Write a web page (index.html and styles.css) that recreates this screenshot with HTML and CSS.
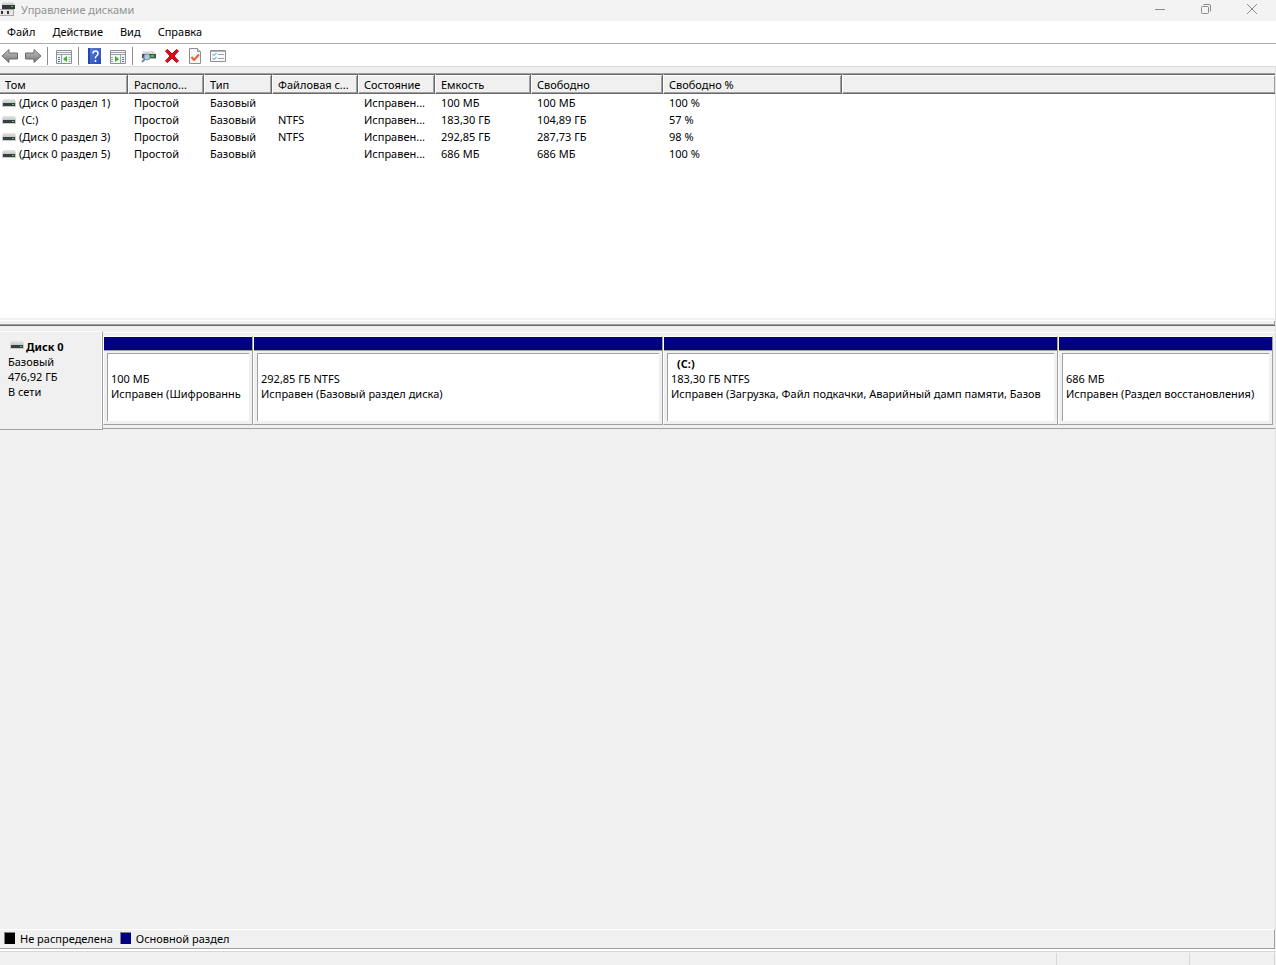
FILE: index.html
```
<!DOCTYPE html>
<html lang="ru">
<head>
    <meta charset="UTF-8">
    <meta name="viewport" content="width=device-width, initial-scale=1.0">
    <title>Управление дисками</title>
    <link rel="stylesheet" href="styles.css">
</head>
<body>
    <svg class="defs" width="0" height="0" aria-hidden="true">
        <linearGradient id="silver" x1="0" y1="0" x2="0" y2="1">
            <stop offset="0" stop-color="#e4e6e8"/>
            <stop offset="1" stop-color="#c2c6ca"/>
        </linearGradient>
        <linearGradient id="arrow" x1="0" y1="0" x2="0" y2="1">
            <stop offset="0" stop-color="#c8c8c8"/>
            <stop offset="1" stop-color="#707070"/>
        </linearGradient>
        <linearGradient id="help" x1="0" y1="0" x2="1" y2="1">
            <stop offset="0" stop-color="#5d82dc"/>
            <stop offset="1" stop-color="#2448b8"/>
        </linearGradient>
        <symbol id="drive" viewBox="0 0 14 8">
            <path d="M1 0h12l1 4H0z" fill="url(#silver)"/>
            <path d="M0 4h14v4H0z" fill="#c9cccf"/>
            <path d="M1 4h12v3H1z" fill="#3b3e40"/>
            <path d="M10 5h2v1h-2z" fill="#3be03b"/>
        </symbol>
    </svg>

    <header class="titlebar">
        <svg class="app-icon" width="16" height="16" viewBox="0 0 16 16">
            <path d="M3 1h10l2 3H1z" fill="url(#silver)"/>
            <path d="M2 4h13v4H2z" fill="#34383a"/>
            <path d="M11 5h2v1h-2z" fill="#3be03b"/>
            <path d="M0 8h14v7H0z" fill="#a8a8a8"/>
            <path d="M0 9h13v5H0z" fill="#e6e6e6"/>
            <path d="M1 10h2v3H1zM7 10h2v3H7z" fill="#333"/>
        </svg>
        <h1>Управление дисками</h1>
        <div class="window-buttons">
            <button type="button" aria-label="Свернуть">
                <svg width="12" height="12" viewBox="0 0 12 12"><path d="M1 6.500h10"/></svg>
            </button>
            <button type="button" aria-label="Восстановить">
                <svg width="12" height="12" viewBox="0 0 12 12"><rect x="1.500" y="3.500" width="7" height="7" rx="1"/><path d="M3.500 1.500H9q1.500 0 1.500 1.500v5.500"/></svg>
            </button>
            <button type="button" aria-label="Закрыть">
                <svg width="12" height="12" viewBox="0 0 12 12"><path d="M1 1l10 10M11 1L1 11"/></svg>
            </button>
        </div>
    </header>

    <nav class="menu">
        <button type="button">Файл</button>
        <button type="button">Действие</button>
        <button type="button">Вид</button>
        <button type="button">Справка</button>
    </nav>

    <div class="toolbar">
        <button type="button" aria-label="Назад">
            <svg width="18" height="16" viewBox="0 0 18 16"><path d="M1 8l7-6.500V5h8.500v6H8v3.500z" fill="url(#arrow)" stroke="#6c6c6c"/></svg>
        </button>
        <button type="button" aria-label="Вперёд">
            <svg width="18" height="16" viewBox="0 0 18 16"><path d="M17 8l-7-6.500V5H1.500v6H10v3.500z" fill="url(#arrow)" stroke="#6c6c6c"/></svg>
        </button>
        <span class="separator"></span>
        <button type="button" aria-label="Дерево консоли">
            <svg width="18" height="16" viewBox="0 0 18 16">
                <path d="M1.500 2.500h15v13h-15z" fill="#f5f6f7" stroke="#8a9097"/>
                <path d="M2 4.500h14M2 6.500h14M6.500 7v8" stroke="#9ba1a7" fill="none"/>
                <path d="M3 9.500h2M3 11.500h2M3 13.500h2" stroke="#3f78b5"/>
                <path d="M13.500 9.500h2M13.500 11.500h2M13.500 13.500h2" stroke="#a3a8ad"/>
                <path d="M12 8v6l-4-3z" fill="#35b51d"/>
                <path d="M13 3h1v1h-1zM15 3h1v1h-1z" fill="#fff"/>
            </svg>
        </button>
        <span class="separator"></span>
        <button type="button" aria-label="Справка">
            <svg width="18" height="16" viewBox="0 0 18 16">
                <path d="M2 0h13v16H2z" fill="url(#help)"/>
                <path d="M2 0h2v16H2z" fill="#2747a8"/>
                <path d="M7 5.500Q7 3 9.500 3T12 5.500Q12 7 10.500 8T9.500 10.500M9.500 12v2" fill="none" stroke="#fff" stroke-width="1.500"/>
            </svg>
        </button>
        <button type="button" aria-label="Панель действий">
            <svg width="18" height="16" viewBox="0 0 18 16">
                <path d="M1.500 2.500h15v13h-15z" fill="#f5f6f7" stroke="#8a9097"/>
                <path d="M2 4.500h14M2 6.500h14M11.500 7v8" stroke="#9ba1a7" fill="none"/>
                <path d="M13 9.500h2M13 11.500h2M13 13.500h2" stroke="#3f78b5"/>
                <path d="M2 9.500h2M2 11.500h2M2 13.500h2" stroke="#a3a8ad"/>
                <path d="M6 8v6l4-3z" fill="#35b51d"/>
            </svg>
        </button>
        <span class="separator"></span>
        <button type="button" aria-label="Повторить проверку дисков">
            <svg width="18" height="16" viewBox="0 0 18 16">
                <path d="M3 3h11l2 4H2z" fill="url(#silver)"/>
                <path d="M2 6h14v4H2z" fill="#4b5054"/>
                <path d="M2 10h14v1H2z" fill="#b6babd"/>
                <path d="M11 7h3v2h-3z" fill="#37d437"/>
                <circle cx="7" cy="9" r="3" fill="#a9cbe2" stroke="#7898ae"/>
                <path d="M5 11l-3 3" stroke="#7c8b98" stroke-width="2"/>
            </svg>
        </button>
        <button type="button" aria-label="Удалить">
            <svg width="18" height="16" viewBox="0 0 18 16"><path d="M2.500 3l2-1.500L9 6l4.500-4.500 2 1.500L11 8l4.500 5-2 1.500L9 10l-4.500 4.500-2-1.500L7 8z" fill="#e00b18" stroke="#b8000c"/></svg>
        </button>
        <button type="button" aria-label="Свойства">
            <svg width="18" height="16" viewBox="0 0 18 16">
                <path d="M3.500.500h8l3 3v12h-11z" fill="#f8f8f8" stroke="#8e8e8e"/>
                <path d="M11.500.500v3h3" fill="#ddd" stroke="#8e8e8e"/>
                <path d="M5.500 9l2.500 3 5-5.500" fill="none" stroke="#e8622a" stroke-width="2"/>
            </svg>
        </button>
        <button type="button" aria-label="Параметры">
            <svg width="18" height="16" viewBox="0 0 18 16">
                <path d="M1.500 2.500h15v11h-15z" fill="#f8f9fa" stroke="#8a9097"/>
                <path d="M2 3.500h14" stroke="#b0b4b8"/>
                <path d="M9 6.500h6M9 10.500h6" stroke="#9ba1a7"/>
                <path d="M3.500 6l1.500 1.500L7.500 5M3.500 10l1.500 1.500L7.500 9" fill="none" stroke="#3b8bd0"/>
            </svg>
        </button>
    </div>

    <main>
        <section class="volumes">
            <table>
                <colgroup>
                    <col class="col-name">
                    <col class="col-layout">
                    <col class="col-type">
                    <col class="col-fs">
                    <col class="col-state">
                    <col class="col-size">
                    <col class="col-free">
                    <col class="col-percent">
                    <col>
                </colgroup>
                <thead>
                    <tr>
                        <th>Том</th>
                        <th>Располо...</th>
                        <th>Тип</th>
                        <th>Файловая с...</th>
                        <th>Состояние</th>
                        <th>Емкость</th>
                        <th>Свободно</th>
                        <th>Свободно %</th>
                        <th></th>
                    </tr>
                </thead>
                <tbody>
                    <tr>
                        <td><svg class="drive" width="14" height="8"><use href="#drive"/></svg>(Диск 0 раздел 1)</td>
                        <td>Простой</td><td>Базовый</td><td></td><td>Исправен...</td><td>100 МБ</td><td>100 МБ</td><td>100 %</td><td></td>
                    </tr>
                    <tr>
                        <td><svg class="drive" width="14" height="8"><use href="#drive"/></svg>&nbsp;(C:)</td>
                        <td>Простой</td><td>Базовый</td><td>NTFS</td><td>Исправен...</td><td>183,30 ГБ</td><td>104,89 ГБ</td><td>57 %</td><td></td>
                    </tr>
                    <tr>
                        <td><svg class="drive" width="14" height="8"><use href="#drive"/></svg>(Диск 0 раздел 3)</td>
                        <td>Простой</td><td>Базовый</td><td>NTFS</td><td>Исправен...</td><td>292,85 ГБ</td><td>287,73 ГБ</td><td>98 %</td><td></td>
                    </tr>
                    <tr>
                        <td><svg class="drive" width="14" height="8"><use href="#drive"/></svg>(Диск 0 раздел 5)</td>
                        <td>Простой</td><td>Базовый</td><td></td><td>Исправен...</td><td>686 МБ</td><td>686 МБ</td><td>100 %</td><td></td>
                    </tr>
                </tbody>
            </table>
        </section>

        <div class="splitter"></div>

        <section class="disks">
            <div class="disk">
                <div class="disk-label">
                    <h2><svg class="drive" width="14" height="8"><use href="#drive"/></svg>Диск 0</h2>
                    <p>Базовый</p>
                    <p>476,92 ГБ</p>
                    <p>В сети</p>
                </div>
                <div class="parts">
                    <div class="part part-efi">
                        <div class="stripe"></div>
                        <div class="info">
                            <h3>&nbsp;</h3>
                            <p>100 МБ</p>
                            <p>Исправен (Шифрованнь</p>
                        </div>
                    </div>
                    <div class="part part-data">
                        <div class="stripe"></div>
                        <div class="info">
                            <h3>&nbsp;</h3>
                            <p>292,85 ГБ NTFS</p>
                            <p>Исправен (Базовый раздел диска)</p>
                        </div>
                    </div>
                    <div class="part part-system">
                        <div class="stripe"></div>
                        <div class="info">
                            <h3>(C:)</h3>
                            <p>183,30 ГБ NTFS</p>
                            <p>Исправен (Загрузка, Файл подкачки, Аварийный дамп памяти, Базов</p>
                        </div>
                    </div>
                    <div class="part part-recovery">
                        <div class="stripe"></div>
                        <div class="info">
                            <h3>&nbsp;</h3>
                            <p>686 МБ</p>
                            <p>Исправен (Раздел восстановления)</p>
                        </div>
                    </div>
                </div>
            </div>
        </section>
    </main>

    <div class="legend">
        <span class="swatch unallocated"></span><span class="legend-text">Не распределена</span>
        <span class="swatch primary"></span><span class="legend-text">Основной раздел</span>
    </div>

    <footer class="statusbar">
        <span class="status-main"></span>
        <span class="status-mid"></span>
        <span class="status-end"></span>
    </footer>
</body>
</html>
```
FILE: styles.css
```
* {
    box-sizing: border-box;
}

body {
    margin: 0;
    min-height: 100vh;
    display: flex;
    flex-direction: column;
    background-color: #f0f0f0;
    color: #000;
    font-family: "Noto Sans", "Open Sans", sans-serif;
    font-size: 11px;
    line-height: 15px;
}

h1, h2, h3, p {
    margin: 0;
    font-size: inherit;
}

button {
    padding: 0;
    border: none;
    background: none;
    color: inherit;
    font: inherit;
}

svg {
    display: block;
}

.defs {
    position: absolute;
}

/* title bar */
.titlebar {
    display: flex;
    align-items: center;
    height: 21px;
    padding: 0 1px 3px 0;
    background-color: #f3f3f3;
    color: #929292;
}

.titlebar h1 {
    margin-left: 5px;
    font-weight: normal;
}

.window-buttons {
    display: flex;
    margin-left: auto;
}

.window-buttons button {
    display: flex;
    justify-content: center;
    align-items: center;
    width: 46px;
    height: 16px;
}

.window-buttons svg {
    fill: none;
    stroke: #8a8a8a;
}

.menu {
    display: flex;
    gap: 17px;
    height: 23px;
    padding: 0 7px 2px;
    background-color: #fff;
    border-bottom: 1px solid #ababb0;
}

.toolbar {
    display: flex;
    align-items: center;
    gap: 5px;
    height: 23px;
    padding: 2px 1px 0;
    background-color: #fff;
    border-bottom: 1px solid #d9d9d9;
}

.separator {
    width: 1px;
    height: 18px;
    margin-right: 2px;
    background-color: #8d8d8d;
}

/* volume list */
main {
    flex: 1;
    display: flex;
    flex-direction: column;
    padding-top: 6px;
    border-right: 1px solid #e0e0e0;
}

.volumes {
    height: 245px;
    background-color: #fff;
    border-top: 1px solid #a0a0a0;
}

.volumes table {
    width: 100%;
    table-layout: fixed;
    border-collapse: separate;
    border-spacing: 0;
}

.col-name { width: 128px; }
.col-layout { width: 76px; }
.col-type { width: 68px; }
.col-fs { width: 86px; }
.col-state { width: 77px; }
.col-size { width: 96px; }
.col-free { width: 132px; }
.col-percent { width: 179px; }

.volumes th,
.volumes td {
    padding: 0 0 0 6px;
    overflow: hidden;
    text-align: left;
    font-weight: normal;
    white-space: nowrap;
}

.volumes th {
    height: 20px;
    padding-left: 5px;
    background-color: #f0f0f0;
    border: 1px solid #fff;
    border-top-color: #696969;
    border-right-color: #696969;
    border-bottom-color: #696969;
    box-shadow: inset 0 1px #fff, inset -1px -1px #a0a0a0;
}

.volumes th:first-child {
    border-left: none;
}

.volumes th:last-child {
    border-right: none;
}

.volumes td {
    height: 17px;
}

.volumes td:first-child {
    padding-left: 2px;
}

.drive {
    display: inline-block;
    margin-right: 3px;
    vertical-align: 0;
}

.splitter {
    height: 8px;
    border-top: 2px solid #f0f0f0;
    border-bottom: 1px solid #696969;
    background-color: #f0f0f0;
    box-shadow: inset 0 1px #fff, inset -1px -1px #a0a0a0;
}

/* graphical view */
.disks {
    flex: 1;
    padding-top: 5px;
}

.disk {
    display: flex;
    height: 99px;
}

.disk-label {
    width: 103px;
    padding: 7px 0 0 8px;
    border-top: 1px solid #fff;
    border-right: 1px solid #a0a0a0;
    border-bottom: 1px solid #a0a0a0;
    box-shadow: inset -1px 0 #fff;
}

.disk-label h2 {
    padding-left: 2px;
}

.disk-label .drive {
    margin-right: 2px;
    vertical-align: 2px;
}

.parts {
    flex: 1;
    min-width: 0;
    display: flex;
    height: 97px;
    margin-top: 1px;
    padding: 3px 2px 3px 0;
    border-top: 1px solid #fff;
    border-bottom: 1px solid #a0a0a0;
}

.part {
    display: flex;
    flex-direction: column;
    min-width: 0;
    border-top: 1px solid #fff;
    border-left: 1px solid #fff;
    border-right: 1px solid #a0a0a0;
    border-bottom: 1px solid #a0a0a0;
}

.part-efi { flex: 148 0 0; }
.part-data { flex: 408 0 0; }
.part-system { flex: 393 0 0; }
.part-recovery { flex: 213 0 0; }

.stripe {
    height: 14px;
    background-color: #000080;
    border-bottom: 1px solid #a0a0a0;
}

.info {
    flex: 1;
    margin: 2px 3px 3px;
    padding: 2px 0 0 3px;
    overflow: hidden;
    background-color: #fff;
    border-top: 1px solid #a0a0a0;
    border-left: 1px solid #a0a0a0;
    white-space: nowrap;
}

.info h3 {
    padding-left: 6px;
}

.legend {
    display: flex;
    align-items: center;
    gap: 5px;
    height: 20px;
    margin-right: 1px;
    padding: 0 0 2px 4px;
    border-top: 1px solid #fff;
    border-right: 1px solid #a0a0a0;
    border-bottom: 1px solid #a0a0a0;
}

.legend-text {
    margin-right: 2px;
}

.swatch {
    width: 11px;
    height: 12px;
    border-top: 1px solid #808080;
    border-left: 1px solid #808080;
}

.unallocated { background-color: #000; }
.primary { background-color: #000080; }

.statusbar {
    display: flex;
    height: 16px;
    padding: 1px 1px 0 0;
    border-top: 2px solid #fff;
    box-shadow: inset 0 1px #d7d7d7;
}

.statusbar span {
    margin-top: 1px;
    border-right: 1px solid #d7d7d7;
}

.status-main { flex: 1; }
.status-mid { width: 133px; }
.status-end { width: 85px; }
```
